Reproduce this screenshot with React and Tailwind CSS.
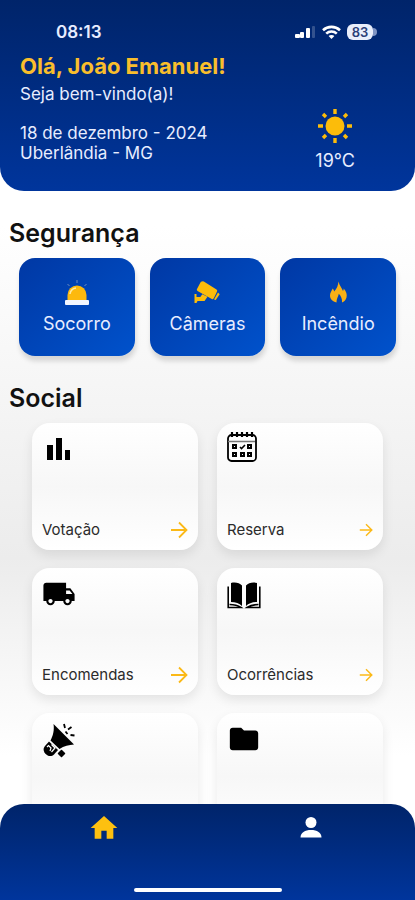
import { MdFolder, MdHome, MdLocalShipping } from 'react-icons/md';

const SignalIcon = () => (
  <svg width="21" height="14" viewBox="0 0 21 14" fill="white" aria-hidden="true">
    <rect x="0" y="9" width="5" height="4" rx="1" />
    <rect x="5" y="7" width="4" height="6" rx="1" />
    <rect x="11" y="3" width="4" height="10" rx="1" />
    <rect x="17" y="1" width="3" height="12" rx="1" opacity="0.2" />
  </svg>
);

const WifiIcon = () => (
  <svg width="19" height="14" viewBox="0 0 19 14" fill="none" stroke="white" strokeWidth="2.6" aria-hidden="true">
    <path d="M1 5.2C5.8.7 13.2.7 18 5.2" />
    <path d="M4.2 8.6c3-2.8 7.600-2.800 10.600 0" />
    <path d="M9.500 14 6.600 11.100c1.600-1.500 4.200-1.500 5.800 0z" fill="white" stroke="none" />
  </svg>
);

const SunIcon = () => (
  <svg width="36" height="36" viewBox="0 0 36 36" fill="#fcbc0a" aria-hidden="true">
    <circle cx="18" cy="18" r="9.500" />
    <g stroke="#fcbc0a" strokeWidth="3.400">
      <path d="M18 1v5M18 30v5M1 18h5M30 18h5" />
      <path d="m6 6 3 3M27 27l3 3M6 30l3-3M27 9l3-3" />
    </g>
  </svg>
);

const SirenIcon = () => (
  <svg width="26" height="26" viewBox="0 0 26 26" aria-hidden="true">
    <path d="M13 0v3M3.500 4l2 2M22.500 4l-2 2" stroke="#6f8dc0" strokeWidth="1" />
    <path d="M3.500 21v-6a9.500 9.500 0 0 1 19 0v6z" fill="#fdb90d" />
    <path d="M6 14a7 7 0 0 1 6-6" stroke="#ffe9a0" strokeWidth="1.500" fill="none" />
    <rect x="1" y="20" width="24" height="5" rx="1" fill="#f2f6ff" />
  </svg>
);

const CameraIcon = () => (
  <svg width="26" height="26" viewBox="0 0 26 26" fill="#fcbc0a" aria-hidden="true">
    <path d="M8 1.500a2 2 0 0 1 1.800 0L22.500 9.500a1.500 1.500 0 0 1 .5 2l-3.200 6.800a1.500 1.500 0 0 1-2 .6L3.500 11a1.500 1.500 0 0 1-.5-2l3.300-6.300a2 2 0 0 1 1.700-1.200z" />
    <path d="m24 12.500 1.700 1.700-4 5.800-1.700-.5z" />
    <path d="M.5 14h2v3h3.800l2-2.800 5.200 2.600-3 4.200H3.500L2.500 23h-2z" />
  </svg>
);

const FireIcon = () => (
  <svg width="26" height="26" viewBox="0 0 26 26" fill="#f9b016" aria-hidden="true">
    <path d="M13.500 1.500c1 4.500 3.500 6.500 4.500 9.500.6-.7.800-1.500.7-2.500 2.600 3 3.600 6 2.800 9-.7 2.700-2.400 4.300-4.500 5 .4-3.500-1-6.500-3.200-8.800-.4 2.800-2.500 5-2.300 8.800-3.900-1-6.500-3.500-6.500-7 0-3 1.800-5 2.800-7 .7.900 1.200 1.900 1.400 3 2.600-2.800 4-6 4.300-10z" />
  </svg>
);

const ChartIcon = () => (
  <svg width="34" height="34" viewBox="0 0 34 34" aria-hidden="true">
    <path d="M5 13h6v15H5zM14 6h6v22h-6zM23 18h5v10h-5z" />
  </svg>
);

const CalendarIcon = () => (
  <svg width="34" height="34" viewBox="2 2 34 34" fill="none" stroke="black" aria-hidden="true">
    <rect x="3" y="5" width="28" height="26" rx="3.500" strokeWidth="1.800" />
    <path d="M3 11.500h27" stroke="#777777" strokeWidth="1.500" />
    <path d="M7 2v5M12 2v5M17 2v5M22 2v5M27 2v5" strokeWidth="2.200" />
    <path d="m15 17 1.500 1.500 3.500-3.500" strokeWidth="1.600" />
    <g strokeWidth="2">
      <rect x="8" y="15" width="3" height="3" />
      <rect x="23" y="15" width="3" height="3" />
      <rect x="8" y="23" width="3" height="3" />
      <rect x="16" y="23" width="3" height="3" />
      <rect x="23" y="23" width="3" height="3" />
    </g>
  </svg>
);

const BookIcon = () => (
  <svg width="34" height="34" viewBox="1 0 34 34" aria-hidden="true">
    <path d="M5 6c4.500-1.200 8.500 0 11 2.500V29c-2.600-2.600-6.500-4-11-4z" />
    <path d="M31 6c-4.500-1.200-8.500 0-11 2.500V29c2.600-2.600 6.500-4 11-4z" />
    <path d="M2.200 9.500v21H15c-3-2-7-3-11.500-3M33.800 9.500v21H21c3-2 7-3 11.500-3" fill="none" stroke="black" strokeWidth="1.600" />
  </svg>
);

const MegaphoneIcon = () => (
  <svg width="34" height="36" viewBox="0 0 34 36" aria-hidden="true">
    <path d="M11.500 2 32 22.500c-5 .5-10 1.500-14.500 4.500L8.500 18.500C11 14 12.500 8 11.500 2z" />
    <path d="m7 19.500 9 8.500-4 4.500c-2.500 2.300-5.500 2-8-.3-2.800-2.600-3.200-5.700-1-8.200z" />
    <path d="m5 25 1.500-1.500L9 26l-1 3M9.500 22.500l3.500 3.500-3.500 4" fill="none" stroke="white" strokeWidth="1.200" />
    <path d="m19.500 28.500 3 3-3 3-3-3z" stroke="black" strokeWidth="1.500" strokeLinejoin="round" />
    <path d="m22 2 1 4M26 7.500l3.500-2.500M28.500 13l4 .5M23.500 9.500l2 2.500" fill="none" stroke="black" strokeWidth="1.800" />
  </svg>
);

const PersonIcon = () => (
  <svg width="30" height="30" viewBox="0 0 30 30" fill="white" aria-hidden="true">
    <circle cx="15" cy="10.500" r="5.500" />
    <path d="M4.500 25.500c0-5 4.500-7.500 10.500-7.500s10.500 2.500 10.500 7.500z" />
  </svg>
);

const ArrowIcon = ({ size }) => (
  <svg width={size} height={size} viewBox="0 0 18 18" fill="none" stroke="#fbb917" strokeWidth="1.800" aria-hidden="true">
    <path d="M1 9h15M9 1.500 16.500 9 9 16.500" />
  </svg>
);

const security = [
  { label: 'Socorro', icon: <SirenIcon /> },
  { label: 'Câmeras', icon: <CameraIcon /> },
  { label: 'Incêndio', icon: <FireIcon /> },
];

const social = [
  { id: 'votacao', label: 'Votação', icon: <ChartIcon />, arrow: 18 },
  { id: 'reserva', label: 'Reserva', icon: <CalendarIcon />, arrow: 14 },
  { id: 'encomendas', label: 'Encomendas', icon: <MdLocalShipping size={34} color="black" />, arrow: 18 },
  { id: 'ocorrencias', label: 'Ocorrências', icon: <BookIcon />, arrow: 14 },
  { id: 'comunicados', title: 'Comunicados', icon: <MegaphoneIcon />, arrow: 18 },
  { id: 'documentos', title: 'Documentos', icon: <MdFolder size={34} color="black" />, arrow: 14 },
];

const StatusBar = () => (
  <div className="flex items-center justify-between pl-9 pr-[18px]">
    <span className="text-[17px] leading-6 font-semibold">08:13</span>
    <div className="flex items-center gap-1.5">
      <SignalIcon />
      <WifiIcon />
      <div className="flex items-center">
        <span className="flex h-4 w-[26px] items-center justify-center rounded-md bg-[#e9eefb] text-[13px] leading-4 font-semibold text-[#2b3f78]">
          83
        </span>
        <span className="h-2 w-1 rounded-r-full bg-[#7f94c4]" />
      </div>
    </div>
  </div>
);

const App = () => {
  return (
    <div className="flex h-screen flex-col overflow-hidden bg-[linear-gradient(#ffffff_25%,#ececec_62%,#ffffff_84%)] font-['Inter','Liberation_Sans',sans-serif] text-[#111111]">
      <header className="shrink-0 rounded-b-3xl bg-linear-to-b from-[#00246a] to-[#00359c] px-5 pt-5 pb-[18px] text-[#e8edff]">
        <StatusBar />
        <h1 className="mt-2 text-[22px] leading-7 font-bold text-[#f9be2c]">Olá, João Emanuel!</h1>
        <p className="text-[17px] leading-7">Seja bem-vindo(a)!</p>
        <div className="flex items-center justify-between pr-10">
          <p className="pt-1 text-[17px] leading-5">
            18 de dezembro - 2024
            <br />
            Uberlândia - MG
          </p>
          <div className="flex flex-col items-center">
            <SunIcon />
            <span className="mt-[5px] text-lg leading-6">19°C</span>
          </div>
        </div>
      </header>

      <main className="min-h-0 flex-1 overflow-y-auto pt-7 [scrollbar-width:none]">
        <h2 className="px-[9px] text-[25px] leading-7 font-semibold">Segurança</h2>
        <div className="mt-[11px] grid grid-cols-3 gap-[15px] px-[19px]">
          {security.map((item) => (
            <button
              key={item.label}
              type="button"
              className="flex h-[98px] flex-col items-center justify-center gap-1 rounded-2xl bg-linear-to-br from-[#0038a4] to-[#0052cc] pt-1 text-lg leading-7 text-[#e8edff] shadow-[1px_5px_5px_rgba(0,0,0,0.14)]"
            >
              {item.icon}
              {item.label}
            </button>
          ))}
        </div>

        <h2 className="mt-7 px-[9px] text-[25px] leading-7 font-semibold">Social</h2>
        <div className="mt-[11px] grid grid-cols-2 gap-x-[19px] gap-y-[18px] px-8 pb-8">
          {social.map((item) => (
            <a
              key={item.id}
              href={`#${item.id}`}
              aria-label={item.title}
              className="flex h-[127px] flex-col justify-between rounded-[18px] bg-linear-to-b from-white via-[#f7f7f7] to-white px-[10px] pt-[9px] pb-2 shadow-[0_5px_12px_rgba(0,0,0,0.09)]"
            >
              {item.icon}
              <span className="flex items-center justify-between text-[15px] leading-6 text-[#2b2b2b]">
                {item.label}
                <ArrowIcon size={item.arrow} />
              </span>
            </a>
          ))}
        </div>
      </main>

      <nav className="shrink-0 rounded-t-3xl bg-linear-to-b from-[#00246a] to-[#00359c] pt-2 pb-2">
        <div className="grid grid-cols-2">
          <button type="button" aria-label="Início" className="flex justify-center">
            <MdHome size={32} color="#fdc010" />
          </button>
          <button type="button" aria-label="Perfil" className="flex justify-center">
            <PersonIcon />
          </button>
        </div>
        <div className="mx-auto mt-11 h-1 w-[148px] rounded-full bg-white" />
      </nav>
    </div>
  );
};

export default App;
